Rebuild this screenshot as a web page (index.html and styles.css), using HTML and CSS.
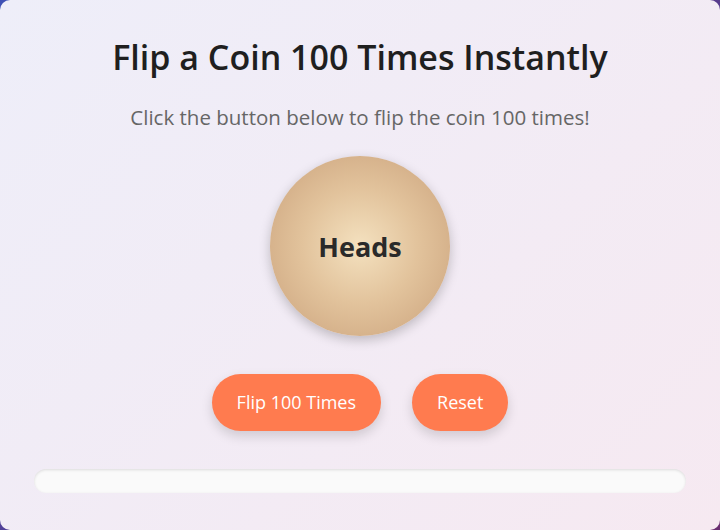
FILE: index.html
```html
<!DOCTYPE html>
<html lang="en">
<head>
    <meta charset="UTF-8">
    <meta name="viewport" content="width=device-width, initial-scale=1.0">
    <link rel="stylesheet" href="styles.css">
    <title>Coin Flipper</title>
</head>
<body>
    <div class="container">
        <h1>Flip a Coin 100 Times Instantly</h1>
        <p class="subtitle">Click the button below to flip the coin 100 times!</p>

        <div class="coin" id="coin">Heads</div>

        <div class="buttons">
            <button id="flip">Flip 100 Times</button>
            <button id="reset">Reset</button>
        </div>

        <div class="progress">
            <div class="progress-bar" id="progress-bar"></div>
        </div>
    </div>

    <script>
        const coin = document.getElementById('coin');
        const bar = document.getElementById('progress-bar');

        document.getElementById('flip').addEventListener('click', () => {
            let heads = 0;
            for (let i = 0; i < 100; i++) {
                if (Math.random() < 0.5) heads++;
            }
            coin.textContent = heads >= 50 ? 'Heads' : 'Tails';
            bar.style.width = heads + '%';
        });

        document.getElementById('reset').addEventListener('click', () => {
            coin.textContent = 'Heads';
            bar.style.width = '0%';
        });
    </script>
</body>
</html>
```

FILE: styles.css
```css
html, body {
    margin: 0;
    height: 100%;
}

body {
    font-family: 'Open Sans', 'Noto Sans', sans-serif;
    background: linear-gradient(135deg, #3f51b5, #6a2c70);
}

.container {
    box-sizing: border-box;
    height: 100%;
    padding: 37px 34px 0;
    border-radius: 10px;
    background: linear-gradient(135deg, #eeeef9, #f6e9f1);
    text-align: center;
}

h1 {
    margin: 0;
    font-size: 34px;
    font-weight: 600;
    line-height: 41px;
    color: #1f1f1f;
}

.subtitle {
    margin: 26px 0 0;
    font-size: 20.5px;
    line-height: 27px;
    color: #666;
}

.coin {
    width: 180px;
    height: 180px;
    margin: 25px auto 0;
    border-radius: 50%;
    background: radial-gradient(circle, #f4e1bf 0%, #e2c39c 45%, #c9a07a 100%);
    box-shadow: 0 4px 12px rgba(0, 0, 0, 0.22);
    display: flex;
    align-items: center;
    justify-content: center;
    font-size: 27px;
    font-weight: 700;
    color: #2a2a2a;
}

.buttons {
    margin-top: 38px;
    display: flex;
    justify-content: center;
    gap: 31px;
}

.buttons button {
    font-family: inherit;
    font-size: 18px;
    line-height: 23px;
    padding: 17px 25px;
    border: none;
    border-radius: 30px;
    background-color: #ff7b4f;
    color: white;
    cursor: pointer;
    box-shadow: 0 5px 12px rgba(0, 0, 0, 0.15);
}

.buttons button:hover {
    background-color: #ff6a3a;
}

.progress {
    margin-top: 38px;
    height: 24px;
    border-radius: 12px;
    background-color: #fafafa;
    box-shadow: inset 0 1px 3px rgba(0, 0, 0, 0.12);
    overflow: hidden;
}

.progress-bar {
    width: 0%;
    height: 100%;
    background-color: #ff7b4f;
}
```
